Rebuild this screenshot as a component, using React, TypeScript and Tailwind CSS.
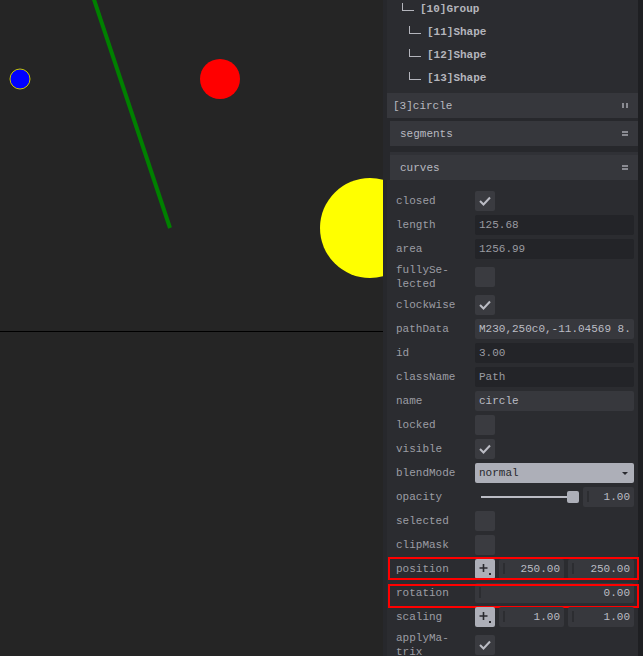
import React from 'react';

type Row =
  | { label: React.ReactNode; kind: 'check'; checked: boolean; box?: 'a' | 'b' }
  | { label: React.ReactNode; kind: 'monitor' | 'text'; value: string; box?: 'a' | 'b' }
  | { label: React.ReactNode; kind: 'select'; value: string; box?: 'a' | 'b' }
  | { label: React.ReactNode; kind: 'slider'; value: string; box?: 'a' | 'b' }
  | { label: React.ReactNode; kind: 'point'; x: string; y: string; box?: 'a' | 'b' }
  | { label: React.ReactNode; kind: 'number'; value: string; box?: 'a' | 'b' };

const rows: Row[] = [
  { label: 'closed', kind: 'check', checked: true },
  { label: 'length', kind: 'monitor', value: '125.68' },
  { label: 'area', kind: 'monitor', value: '1256.99' },
  { label: <>fullySe-<br />lected</>, kind: 'check', checked: false },
  { label: 'clockwise', kind: 'check', checked: true },
  { label: 'pathData', kind: 'text', value: 'M230,250c0,-11.04569 8.' },
  { label: 'id', kind: 'monitor', value: '3.00' },
  { label: 'className', kind: 'monitor', value: 'Path' },
  { label: 'name', kind: 'text', value: 'circle' },
  { label: 'locked', kind: 'check', checked: false },
  { label: 'visible', kind: 'check', checked: true },
  { label: 'blendMode', kind: 'select', value: 'normal' },
  { label: 'opacity', kind: 'slider', value: '1.00' },
  { label: 'selected', kind: 'check', checked: false },
  { label: 'clipMask', kind: 'check', checked: false },
  { label: 'position', kind: 'point', x: '250.00', y: '250.00', box: 'a' },
  { label: 'rotation', kind: 'number', value: '0.00', box: 'b' },
  { label: 'scaling', kind: 'point', x: '1.00', y: '1.00' },
  { label: <>applyMa-<br />trix</>, kind: 'check', checked: true },
];

function Checkbox({ checked }: { checked: boolean }) {
  return (
    <div className="w-5 h-5 rounded-[2px] bg-[#3a3b40] flex items-center justify-center">
      {checked && (
        <svg width="20" height="20" viewBox="0 0 20 20">
          <polyline points="5,10 8.5,13.5 15,6.5" fill="none" stroke="#bbbcc4" strokeWidth="2" />
        </svg>
      )}
    </div>
  );
}

function NumBox({ value, className }: { value: string; className: string }) {
  return (
    <div className={`relative h-5 rounded-[2px] bg-[#37383d] text-[#bbbcc4] text-right pr-1 leading-5 ${className}`}>
      <span className="absolute left-1 top-1 w-[2px] h-[11px] bg-[#2c2d31]" />
      {value}
    </div>
  );
}

function PointButton() {
  return (
    <div className="w-5 h-5 shrink-0 rounded-[2px] bg-[#adafb8]">
      <svg width="20" height="20" viewBox="0 0 20 20">
        <path d="M8.5 5v8M4.5 9h8" stroke="#28292e" strokeWidth="1.6" />
        <rect x="14" y="14" width="2" height="2" fill="#28292e" />
      </svg>
    </div>
  );
}

function Value({ row }: { row: Row }) {
  switch (row.kind) {
    case 'check':
      return <Checkbox checked={row.checked} />;
    case 'monitor':
      return (
        <div className="h-5 rounded-[2px] bg-[#232428] text-[#9a9ba1] pl-1 leading-5 whitespace-nowrap overflow-hidden">
          {row.value}
        </div>
      );
    case 'text':
      return (
        <div className="h-5 rounded-[2px] bg-[#37383d] text-[#bbbcc4] pl-1 leading-5 whitespace-nowrap overflow-hidden">
          {row.value}
        </div>
      );
    case 'select':
      return (
        <div className="relative h-5 rounded-[2px] bg-[#adafb8] text-[#28292e] pl-1 leading-5">
          {row.value}
          <span className="absolute right-[6px] top-[9px] w-0 h-0 border-l-[3px] border-r-[3px] border-t-[3px] border-l-transparent border-r-transparent border-t-[#28292e]" />
        </div>
      );
    case 'slider':
      return (
        <div className="flex gap-1">
          <div className="relative w-[104px] h-5">
            <span className="absolute left-[6px] right-[8px] top-[9px] h-[2px] bg-[#bbbcc4]" />
            <span className="absolute right-0 top-1 w-3 h-3 rounded-[2px] bg-[#adafb8]" />
          </div>
          <NumBox value={row.value} className="w-[51px]" />
        </div>
      );
    case 'point':
      return (
        <div className="flex gap-1">
          <PointButton />
          <NumBox value={row.x} className="w-[65px]" />
          <NumBox value={row.y} className="w-[66px]" />
        </div>
      );
    case 'number':
      return <NumBox value={row.value} className="w-full" />;
  }
}

function TreeItem({ indent, text }: { indent: number; text: string }) {
  return (
    <div className="h-[23px] flex items-center" style={{ paddingLeft: indent }}>
      <span className="w-3 h-2 border-l border-b border-[#b4b5bc] mb-[6px]" />
      <span className="ml-[6px] font-bold text-[#b4b5bc]">{text}</span>
    </div>
  );
}

function Canvas() {
  return (
    <div className="w-[383px] shrink-0 flex flex-col bg-[#252525]">
      <svg width="383" height="331" viewBox="0 0 383 331" className="block shrink-0">
        <line x1="93.5" y1="-2" x2="170" y2="228" stroke="#008000" strokeWidth="4" />
        <circle cx="220" cy="79" r="20" fill="#ff0000" />
        <circle cx="20" cy="79" r="10" fill="#0000ff" stroke="#c8c800" strokeWidth="1" />
        <circle cx="370" cy="228" r="50" fill="#ffff00" />
      </svg>
      <div className="h-px shrink-0 bg-black" />
      <div className="flex-1" />
    </div>
  );
}

export default function App() {
  return (
    <div className="w-[643px] h-[656px] overflow-hidden flex bg-[#252525] text-[11px] font-['Liberation_Mono',monospace]">
      <Canvas />

      <div className="flex-1 flex bg-[#27282c]">
        <div className="w-[4px] shrink-0" />
        <div className="w-[251px] shrink-0 flex flex-col">
          {/* tree */}
          <div className="h-[93px] shrink-0 bg-[#2b2c30] overflow-hidden">
            <div className="-mt-[2px]">
              <TreeItem indent={15} text="[10]Group" />
              <TreeItem indent={22} text="[11]Shape" />
              <TreeItem indent={22} text="[12]Shape" />
              <TreeItem indent={22} text="[13]Shape" />
            </div>
          </div>

          {/* folder header */}
          <div className="h-[25px] shrink-0 bg-[#36373c] flex items-center justify-between pl-[6px] pr-[10px] pt-[2px] text-[#b8b9c0]">
            <span>[3]circle</span>
            <span className="flex gap-[2px] -mt-[2px]">
              <span className="w-[2px] h-[5px] bg-[#8a8b92]" />
              <span className="w-[2px] h-[5px] bg-[#8a8b92]" />
            </span>
          </div>

          <div className="pl-[3px] pt-[3px] shrink-0 flex flex-col">
            {['segments', 'curves'].map((t, i) => (
              <div key={t} className={i ? 'mt-[6px] border-t-[3px] border-[#303136]' : ''}>
                <div className="h-[25px] bg-[#36373c] flex items-center justify-between pl-[10px] pr-[10px] pt-[2px] text-[#b8b9c0]">
                  <span>{t}</span>
                  <span className="flex flex-col gap-[1px] -mt-[2px]">
                    <span className="w-[6px] h-[2px] bg-[#8a8b92]" />
                    <span className="w-[6px] h-[2px] bg-[#8a8b92]" />
                  </span>
                </div>
              </div>
            ))}
          </div>

          {/* properties */}
          <div className="flex flex-col gap-1 pt-[11px] bg-[#2b2c30] shrink-0">
            {rows.map((row, i) => (
              <div key={i} className="relative flex items-center min-h-5 shrink-0">
                <div className="w-[88px] shrink-0 pl-[9px] leading-[14px] text-[#9c9da4]">{row.label}</div>
                <div className="w-[159px] shrink-0">
                  <Value row={row} />
                </div>
                {row.box === 'a' && (
                  <span className="absolute left-[1px] -right-[1px] -top-[2px] h-[23px] border-2 border-[#ff0000]" />
                )}
                {row.box === 'b' && (
                  <span className="absolute left-[1px] -right-[1px] top-[1px] h-[24px] border-2 border-[#ff0000]" />
                )}
              </div>
            ))}
          </div>
        </div>
        <div className="flex-1 bg-[#1e1f22]" />
      </div>
    </div>
  );
}
